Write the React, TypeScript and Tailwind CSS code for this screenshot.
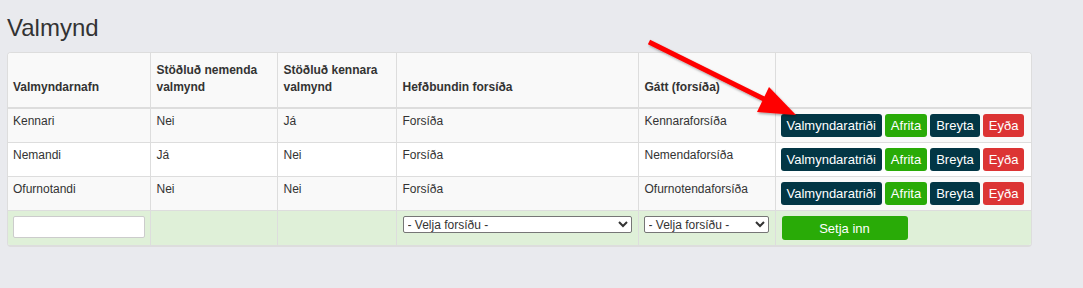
import React from 'react';

const rows = [
  { name: 'Kennari', nem: 'Nei', ken: 'Já', fors: 'Forsíða', gatt: 'Kennaraforsíða' },
  { name: 'Nemandi', nem: 'Já', ken: 'Nei', fors: 'Forsíða', gatt: 'Nemendaforsíða' },
  { name: 'Ofurnotandi', nem: 'Nei', ken: 'Nei', fors: 'Forsíða', gatt: 'Ofurnotendaforsíða' },
];

const btn = 'h-[23px] px-[6px] rounded-[3px] text-white text-[13px] leading-[23px] whitespace-nowrap';

export default function App() {
  return (
    <div className="relative min-h-[288px] bg-[#e9eaee] px-[7px] pt-[15px] text-[#333] font-['Liberation_Sans',Arial,sans-serif]">
      <h1 className="text-[24px] leading-[26px] mb-[11px]">Valmynd</h1>

      {/* Tafla */}
      <div className="w-[1025px] border border-[#ddd] border-b-2 rounded-[4px] overflow-hidden bg-white">
        <table className="w-[1023px] table-fixed border-collapse text-[12px] leading-[17px]">
          <colgroup>
            <col className="w-[142px]" />
            <col className="w-[127px]" />
            <col className="w-[119px]" />
            <col className="w-[242px]" />
            <col className="w-[137px]" />
            <col className="w-[256px]" />
          </colgroup>
          <thead>
            <tr className="bg-[#f9f9f9] h-[55px]">
              <th className="text-left align-bottom font-bold px-[5px] pb-[11px] border-b-2 border-[#ddd]">Valmyndarnafn</th>
              <th className="text-left align-bottom font-bold px-[6px] pb-[11px] border-b-2 border-l border-[#ddd]">Stöðluð nemenda valmynd</th>
              <th className="text-left align-bottom font-bold px-[6px] pb-[11px] border-b-2 border-l border-[#ddd]">Stöðluð kennara valmynd</th>
              <th className="text-left align-bottom font-bold px-[6px] pb-[11px] border-b-2 border-l border-[#ddd]">Hefðbundin forsíða</th>
              <th className="text-left align-bottom font-bold px-[6px] pb-[11px] border-b-2 border-l border-[#ddd]">Gátt (forsíða)</th>
              <th className="border-b-2 border-l border-[#ddd]"></th>
            </tr>
          </thead>
          <tbody>
            {rows.map((r, i) => (
              <tr key={r.name} className={i % 2 === 0 ? 'bg-[#f9f9f9]' : 'bg-white'}>
                <td className="align-top px-[5px] pt-[4px] border-t border-[#ddd]">{r.name}</td>
                <td className="align-top px-[6px] pt-[4px] border-t border-l border-[#ddd]">{r.nem}</td>
                <td className="align-top px-[6px] pt-[4px] border-t border-l border-[#ddd]">{r.ken}</td>
                <td className="align-top px-[6px] pt-[4px] border-t border-l border-[#ddd]">{r.fors}</td>
                <td className="align-top px-[6px] pt-[4px] border-t border-l border-[#ddd]">{r.gatt}</td>
                <td className="align-top pl-[5px] py-[5px] border-t border-l border-[#ddd]">
                  <div className="flex gap-[3px]">
                    <button className={`${btn} bg-[#023645]`}>Valmyndaratriði</button>
                    <button className={`${btn} bg-[#29ab07]`}>Afrita</button>
                    <button className={`${btn} bg-[#023645]`}>Breyta</button>
                    <button className={`${btn} bg-[#dc3434]`}>Eyða</button>
                  </div>
                </td>
              </tr>
            ))}
            <tr className="bg-[#dff0d8] h-[34px]">
              <td className="align-top px-[5px] pt-[5px] border-t border-[#ddd]">
                <input className="block w-[132px] h-[22px] bg-white border border-[#ccc] rounded-[2px]" />
              </td>
              <td className="border-t border-l border-[#ddd]"></td>
              <td className="border-t border-l border-[#ddd]"></td>
              <td className="align-top px-[6px] pt-[5px] border-t border-l border-[#ddd]">
                <select className="block w-[229px] h-[17px] bg-white border border-[#767676] rounded-[2px] text-[12px] leading-[15px] text-[#333]">
                  <option>- Velja forsíðu -</option>
                </select>
              </td>
              <td className="align-top px-[5px] pt-[5px] border-t border-l border-[#ddd]">
                <select className="block w-[125px] h-[17px] bg-white border border-[#767676] rounded-[2px] text-[12px] leading-[15px] text-[#333]">
                  <option>- Velja forsíðu -</option>
                </select>
              </td>
              <td className="align-top pl-[6px] pt-[5px] border-t border-l border-[#ddd]">
                <button className="block w-[126px] h-[24px] rounded-[3px] bg-[#29ab07] text-white text-[13px]">Setja inn</button>
              </td>
            </tr>
          </tbody>
        </table>
      </div>

      {/* Rauða örin */}
      <svg className="absolute left-0 top-0 pointer-events-none" width="1083" height="288">
        <defs>
          <filter id="sh" x="-20%" y="-20%" width="140%" height="140%">
            <feDropShadow dx="1" dy="1.5" stdDeviation="1" floodColor="#000" floodOpacity="0.35" />
          </filter>
        </defs>
        <g filter="url(#sh)">
          <line x1="649" y1="42" x2="768" y2="101" stroke="#f00" strokeWidth="5" />
          <polygon points="796,115 757,112 769,87" fill="#f00" />
        </g>
      </svg>
    </div>
  );
}
